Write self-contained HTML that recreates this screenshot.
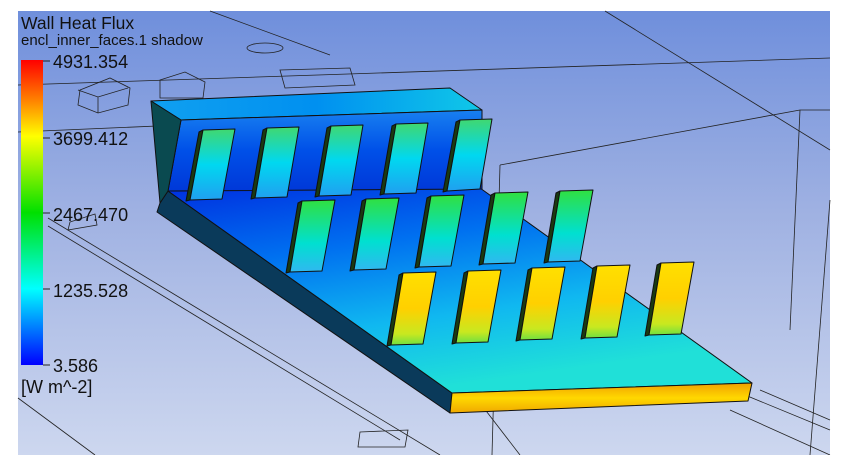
<!DOCTYPE html>
<html><head><meta charset="utf-8"><style>
html,body{margin:0;padding:0;background:#fff;width:841px;height:467px;overflow:hidden}
svg{position:absolute;left:0;top:0}
text{font-family:"Liberation Sans",sans-serif;fill:#111}
</style></head><body>
<svg width="841" height="467" viewBox="0 0 841 467">
<defs>
<linearGradient id="bg" x1="0" y1="0" x2="0" y2="1">
<stop offset="0" stop-color="#6f8fdc"/><stop offset="0.45" stop-color="#9fb1e2"/><stop offset="1" stop-color="#cdd7ef"/></linearGradient>
<linearGradient id="leg" x1="0" y1="0" x2="0" y2="1">
<stop offset="0" stop-color="#ff0000"/><stop offset="0.13" stop-color="#ff8000"/><stop offset="0.25" stop-color="#ffff00"/><stop offset="0.5" stop-color="#00e000"/><stop offset="0.75" stop-color="#00ffff"/><stop offset="1" stop-color="#0000ff"/></linearGradient>
<linearGradient id="wall" x1="0" y1="0" x2="0" y2="1">
<stop offset="0" stop-color="#1880f0"/><stop offset="0.5" stop-color="#0050e8"/><stop offset="1" stop-color="#0038d8"/></linearGradient>
<linearGradient id="walltop" x1="0" y1="0" x2="1" y2="0">
<stop offset="0" stop-color="#10a0f0"/><stop offset="0.5" stop-color="#0090f0"/><stop offset="1" stop-color="#10c8e8"/></linearGradient>
<linearGradient id="plate" x1="0" y1="0" x2="0.4" y2="1">
<stop offset="0" stop-color="#0030e0"/><stop offset="0.35" stop-color="#0070f0"/><stop offset="0.7" stop-color="#10b8f0"/><stop offset="1" stop-color="#20e0d8"/></linearGradient>
<linearGradient id="front" x1="0" y1="0" x2="0" y2="1">
<stop offset="0" stop-color="#f0a000"/><stop offset="0.5" stop-color="#ffd800"/><stop offset="1" stop-color="#f0a800"/></linearGradient>
<linearGradient id="f1" x1="0" y1="0" x2="0" y2="1">
<stop offset="0" stop-color="#40d870"/><stop offset="0.5" stop-color="#00d8f0"/><stop offset="1" stop-color="#20a0f0"/></linearGradient>
<linearGradient id="f2" x1="0" y1="0" x2="0" y2="1">
<stop offset="0" stop-color="#30e040"/><stop offset="0.6" stop-color="#00e0d0"/><stop offset="1" stop-color="#30b8f0"/></linearGradient>
<linearGradient id="f3" x1="0" y1="0" x2="0" y2="1">
<stop offset="0" stop-color="#ffe000"/><stop offset="0.5" stop-color="#ffd000"/><stop offset="0.85" stop-color="#c8e820"/><stop offset="1" stop-color="#70e040"/></linearGradient>
</defs>
<rect x="18" y="11" width="812" height="444" fill="url(#bg)"/>
<g stroke="#222" stroke-width="0.8" fill="none">
<path d="M210 11 L330 55"/>
<path d="M18 85 L830 58"/><path d="M18 132 L180 125"/>
<path d="M48 218 L440 455"/><path d="M48 226 L400 440"/>
<path d="M18 398 L95 455"/>
<path d="M360 432 L408 430 L405 447 L358 447 Z"/>
<path d="M70 222 L95 214 L97 225 L68 230 Z"/>
<path d="M80 90 L110 78 L130 88 L128 105 L98 113 L78 105 Z M78 90 L98 97 L128 88 M98 97 L98 113"/>
<path d="M160 80 L185 72 L205 82 L203 98 L160 98 Z"/>
<path d="M280 70 L350 68 L355 85 L285 88 Z"/>
<ellipse cx="265" cy="48" rx="18" ry="5"/>
<path d="M605 11 L830 150"/><path d="M500 165 L800 110 L830 110"/>
<path d="M500 165 L492 455"/><path d="M800 110 L790 330"/>
<path d="M730 410 L830 455"/><path d="M745 395 L830 430"/><path d="M760 390 L830 420"/>
<path d="M830 200 L810 455"/>
<path d="M470 390 L520 455"/>
</g>
<rect x="21" y="60" width="22" height="305" fill="url(#leg)"/>
<g stroke="#222" stroke-width="1"><path d="M43 61 L50 61 M43 138 L50 138 M43 213 L50 213 M43 289 L50 289 M43 365 L50 365"/></g>
<text x="21" y="29" font-size="17.5">Wall Heat Flux</text>
<text x="21" y="45" font-size="15">encl_inner_faces.1 shadow</text>
<text x="53" y="68" font-size="18">4931.354</text>
<text x="53" y="145" font-size="18">3699.412</text>
<text x="53" y="221" font-size="18">2467.470</text>
<text x="53" y="297" font-size="18">1235.528</text>
<text x="53" y="372" font-size="18">3.586</text>
<text x="21" y="393" font-size="18">[W m^-2]</text>
<g stroke="#111" stroke-width="1" stroke-linejoin="round">
<path d="M151 101 L181 120 L168 191 L160 203 L157 212 L450 413 L452 393 L168 191 Z" fill="#0a3a5a"/>
<path d="M168 191 L480 188 L752 383 L452 393 Z" fill="url(#plate)"/>
<path d="M452 393 L752 383 L748 401 L450 413 Z" fill="url(#front)"/>
<path d="M151 101 L450 88 L482 110 L181 120 Z" fill="url(#walltop)"/>
<path d="M181 120 L482 110 L482 189 L168 191 Z" fill="url(#wall)"/>
<path d="M151 101 L181 120 L168 191 L160 203 Z" fill="#0a4a50"/>
</g>
<g stroke="#111" stroke-width="1" stroke-linejoin="round">
<g fill="#1a3a10">
<path d="M199 132 L203 130 L190 200 L186 201 Z"/>
<path d="M263 130 L267 128 L255 198 L251 199 Z"/>
<path d="M327 128 L331 126 L319 196 L315 197 Z"/>
<path d="M392 126 L396 124 L384 194 L380 195 Z"/>
<path d="M456 122 L460 120 L447 191 L443 192 Z"/>
<path d="M298 203 L302 201 L290 272 L286 273 Z"/>
<path d="M362 201 L366 199 L354 270 L350 271 Z"/>
<path d="M427 198 L431 196 L419 267 L415 268 Z"/>
<path d="M491 195 L495 193 L483 264 L479 265 Z"/>
<path d="M556 193 L560 191 L548 262 L544 263 Z"/>
<path d="M399 275 L403 273 L391 345 L387 346 Z"/>
<path d="M464 273 L468 271 L456 343 L452 344 Z"/>
<path d="M528 270 L532 268 L520 340 L516 341 Z"/>
<path d="M593 268 L597 266 L585 338 L581 339 Z"/>
<path d="M657 265 L661 263 L649 335 L645 336 Z"/>
</g>
<g fill="url(#f1)">
<path d="M203 130 L235 129 L222 199 L190 200 Z"/>
<path d="M267 128 L299 127 L287 197 L255 198 Z"/>
<path d="M331 126 L363 125 L351 195 L319 196 Z"/>
<path d="M396 124 L428 123 L416 193 L384 194 Z"/>
<path d="M460 120 L492 119 L480 189 L447 191 Z"/>
</g>
<g fill="url(#f2)">
<path d="M302 201 L335 200 L322 271 L290 272 Z"/>
<path d="M366 199 L399 198 L386 269 L354 270 Z"/>
<path d="M431 196 L464 195 L451 266 L419 267 Z"/>
<path d="M495 193 L528 192 L515 263 L483 264 Z"/>
<path d="M560 191 L593 190 L580 261 L548 262 Z"/>
</g>
<g fill="url(#f3)">
<path d="M403 273 L436 272 L423 344 L391 345 Z"/>
<path d="M468 271 L501 270 L488 342 L456 343 Z"/>
<path d="M532 268 L565 267 L552 339 L520 340 Z"/>
<path d="M597 266 L630 265 L617 337 L585 338 Z"/>
<path d="M661 263 L694 262 L681 334 L649 335 Z"/>
</g>
</g>
<rect x="18" y="455" width="823" height="12" fill="#fff"/>
</svg>
</body></html>
